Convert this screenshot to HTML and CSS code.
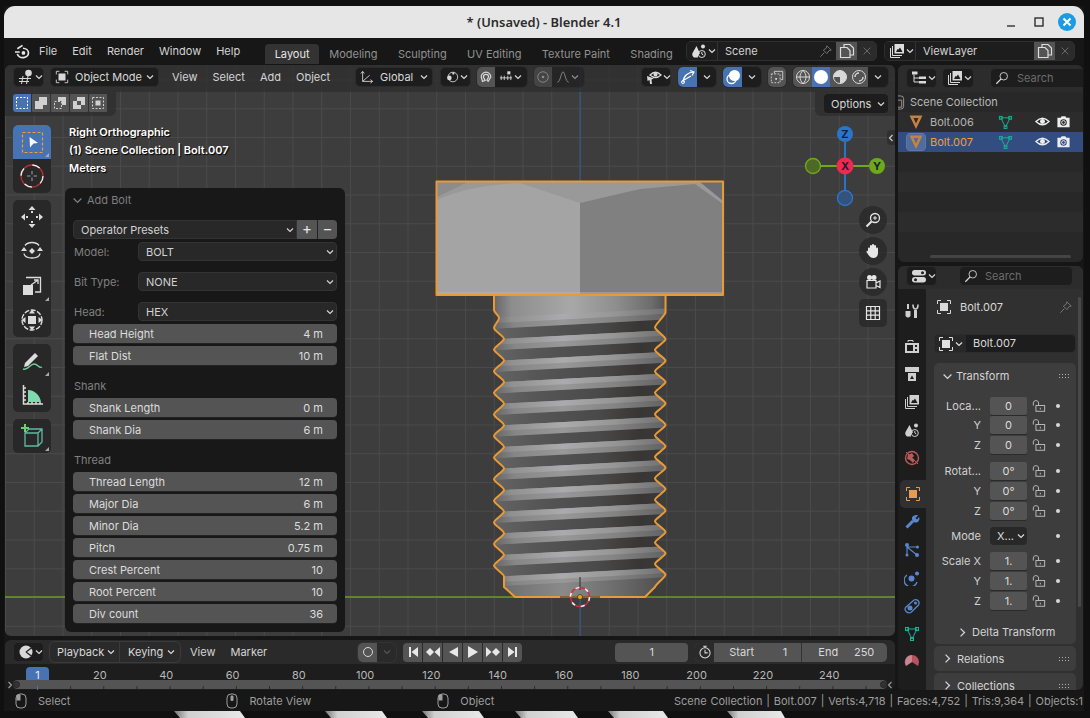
FILE: index.html
```html
<!DOCTYPE html>
<html lang="en">
<head>
<meta charset="utf-8">
<title>Blender 4.1</title>
<link rel="stylesheet" href="styles.css">
</head>
<body>
<svg class="defs" aria-hidden="true">
  <symbol id="chev" viewBox="0 0 10 10"><path d="M2 3.5 5 6.5 8 3.5"/></symbol>
  <symbol id="chevr" viewBox="0 0 10 10"><path d="M3.5 2 6.5 5 3.5 8"/></symbol>
  <symbol id="chevl" viewBox="0 0 10 10"><path d="M6.5 2 3.5 5 6.5 8"/></symbol>
  <symbol id="obj" viewBox="0 0 16 16"><path d="M1.500 5V1.500H5M11 1.500h3.500V5M14.500 11v3.500H11M5 14.500H1.500V11"/><rect class="f" x="4" y="4" width="8" height="8"/></symbol>
  <symbol id="mesh" viewBox="0 0 16 16"><path d="M3 3H13L8 13Z"/><rect x="1.500" y="1.500" width="3" height="3"/><rect x="11.500" y="1.500" width="3" height="3"/><rect x="6.500" y="11.500" width="3" height="3"/></symbol>
  <symbol id="tri" viewBox="0 0 16 16"><path class="f" fill-rule="evenodd" d="M1.500 1.500H14.500L8 15ZM5.500 4 8 9.500 10.500 4Z"/></symbol>
  <symbol id="eye" viewBox="0 0 16 16"><path stroke-width="1.400" d="M1 8Q8 1 15 8 8 15 1 8Z"/><circle class="f" cx="8" cy="8" r="2.600"/></symbol>
  <symbol id="cam" viewBox="0 0 16 16"><path class="f" fill-rule="evenodd" d="M1.500 4H5L6 2.500H10L11 4H14.500V14H1.500ZM8 5.500A3.500 3.500 0 1 0 8 12.500 3.500 3.500 0 0 0 8 5.500Z"/><circle cx="8" cy="9" r="2"/></symbol>
  <symbol id="pin" viewBox="0 0 16 16"><path d="M1.500 14.500 6 10M9 2 14 7 11.500 7.500 9 11 5 7 8.500 4.500Z"/></symbol>
  <symbol id="dup" viewBox="0 0 16 16"><path stroke-width="1.200" d="M5 4V1.500H11L14.500 5V12H11M1.500 4.500H8L11 7.500V14.500H1.500Z"/></symbol>
  <symbol id="x" viewBox="0 0 16 16"><path stroke-width="1.300" d="M3.500 3.500 12.500 12.500M12.500 3.500 3.500 12.500"/></symbol>
  <symbol id="search" viewBox="0 0 16 16"><circle cx="10" cy="6" r="4.300"/><path stroke-width="1.500" d="M7 9 1.500 14.500"/></symbol>
  <symbol id="layer" viewBox="0 0 16 16"><path d="M1.500 5V14.500H11M3.500 3V12.500H13"/><path class="f" fill-rule="evenodd" d="M5.500 1H15V10.500H5.500ZM7 9H13.500L11 4.500 9.500 6.500 8.500 6Z"/></symbol>
  <symbol id="scene" viewBox="0 0 16 16"><path class="f" d="M5.500 3 9 10.500A3.500 3.500 0 0 0 7 14.500H3A4 4 0 0 1 1.500 10Z"/><circle class="f" cx="12" cy="3.500" r="2"/><circle cx="10.800" cy="11" r="3.500"/><path d="M10.800 9v2l1.500 1"/></symbol>
  <symbol id="grid3d" viewBox="0 0 16 16"><path d="M1 9.500H13M1 12.500H11M5 7 3.500 15M10 7 8.500 15"/><circle class="f" cx="10.500" cy="4" r="3.300"/></symbol>
  <symbol id="outl" viewBox="0 0 16 16"><path class="f" d="M1 1.500H6.500V4.500H1ZM8 6.500H15V9H8ZM8 11H15V13.500H8Z"/><path d="M3 4.500V12H8M3 8H8"/></symbol>
  <symbol id="props" viewBox="0 0 16 16"><rect class="f" x="1" y="2" width="14" height="5.500" rx="2.700"/><rect class="f" x="1" y="9" width="14" height="5.500" rx="2.700"/><circle cx="11.500" cy="4.700" r="1.500" fill="#1d1d1d" stroke="none"/><circle cx="4.500" cy="11.700" r="1.500" fill="#1d1d1d" stroke="none"/></symbol>
  <symbol id="clock" viewBox="0 0 16 16"><circle class="f" cx="8" cy="8" r="6.500"/><path stroke="#282828" stroke-width="1.400" d="M8 8 14 3.500M8 8 14 12.500"/></symbol>
  <symbol id="timer" viewBox="0 0 16 16"><circle cx="8" cy="9" r="5.800" stroke-width="1.200"/><path stroke-width="1.200" d="M6 1.500h4M8 1.500v2M8 5.500V9H11"/></symbol>
  <symbol id="lock" viewBox="0 0 16 16"><rect x="4.500" y="7.500" width="10" height="6.500"/><path d="M1.500 7.500V4.500C1.500 1 7.500 1 7.500 4.500V7.500M9.500 10v2"/></symbol>
  <symbol id="mouse-l" viewBox="0 0 16 16"><rect x="3" y="1" width="10" height="14" rx="4"/><path class="f" d="M7.500 1.500H5A2 2 0 0 0 3.500 4V7.500H7.500Z"/></symbol>
  <symbol id="mouse-m" viewBox="0 0 16 16"><rect x="3" y="1" width="10" height="14" rx="4"/><rect class="f" x="6.500" y="2.500" width="3" height="5.500" rx="1"/></symbol>
  <symbol id="grip" viewBox="0 0 14 6"><path class="f" d="M1 1h1v1H1zM4 1h1v1H4zM7 1h1v1H7zM10 1h1v1h-1zM1 4h1v1H1zM4 4h1v1H4zM7 4h1v1H7zM10 4h1v1h-1z"/></symbol>
  <symbol id="gridico" viewBox="0 0 16 16"><path stroke-width="1.200" d="M1.500 1.500H14.500V14.500H1.500ZM1.500 5.800H14.500M1.500 10.200H14.500M5.800 1.500V14.500M10.200 1.500V14.500"/></symbol>
</svg>

<div class="win">
  <header class="titlebar">
    <span class="title">* (Unsaved) - Blender 4.1</span>
    <div class="wctl">
      <svg class="wmin" viewBox="0 0 14 14"><path d="M3 11H11"/></svg>
      <svg class="wmax" viewBox="0 0 14 14"><rect x="3" y="3" width="8" height="8"/></svg>
      <span class="wclose"><svg viewBox="0 0 14 14"><path d="M3.500 3.500 10.500 10.500M10.500 3.500 3.500 10.500"/></svg></span>
    </div>
  </header>

  <nav class="topbar">
    <svg class="logo" viewBox="0 0 18 16"><path class="logo-s" d="M1 8.500H6M3.500 5 9 1.500M3.500 10.500A6 5 0 1 0 9.500 4.500"/><circle class="logo-f" cx="10" cy="9.500" r="2"/></svg>
    <span class="mn">File</span><span class="mn">Edit</span><span class="mn">Render</span><span class="mn">Window</span><span class="mn">Help</span>
    <div class="tabs">
      <span class="tab on">Layout</span><span class="tab">Modeling</span><span class="tab">Sculpting</span><span class="tab">UV Editing</span><span class="tab">Texture Paint</span><span class="tab">Shading</span>
    </div>
    <div class="idblock first">
      <span class="idicon"><svg class="ic i16"><use href="#scene"/></svg><svg class="chev"><use href="#chev"/></svg></span>
      <span class="idname sc">Scene<svg class="ic i14 dim"><use href="#pin"/></svg></span>
      <span class="idbtn on"><svg class="ic i16"><use href="#dup"/></svg></span>
      <span class="idbtn"><svg class="ic i12 dim2"><use href="#x"/></svg></span>
    </div>
    <div class="idblock">
      <span class="idicon vl"><svg class="ic i16"><use href="#layer"/></svg><svg class="chev"><use href="#chev"/></svg></span>
      <span class="idname">ViewLayer</span>
      <span class="idbtn on"><svg class="ic i16"><use href="#dup"/></svg></span>
      <span class="idbtn"><svg class="ic i12 dim2"><use href="#x"/></svg></span>
    </div>
  </nav>

  <main class="main">
    <div class="col-left">
      <section class="viewport">
        <svg class="scene3d" viewBox="5 65 890 571" aria-hidden="true">
          <defs>
            <linearGradient id="gBase" x1="0" x2="1" y1="0" y2="0">
              <stop offset="0" stop-color="#5f5f5f"/><stop offset=".12" stop-color="#8d8d8d"/><stop offset=".45" stop-color="#a8a8a8"/><stop offset=".7" stop-color="#8e8e8e"/><stop offset=".9" stop-color="#6c6c6c"/><stop offset="1" stop-color="#4a4a4c"/>
            </linearGradient>
            <linearGradient id="gLight" gradientUnits="userSpaceOnUse" x1="494" x2="666" y1="0" y2="0">
              <stop offset="0" stop-color="#6e6e6e"/><stop offset=".1" stop-color="#909090"/><stop offset=".4" stop-color="#ababad"/><stop offset=".7" stop-color="#969696"/><stop offset="1" stop-color="#707072"/>
            </linearGradient>
            <linearGradient id="gLow" gradientUnits="userSpaceOnUse" x1="494" x2="666" y1="0" y2="0">
              <stop offset="0" stop-color="#666"/><stop offset=".12" stop-color="#868686"/><stop offset=".4" stop-color="#989899"/><stop offset=".7" stop-color="#848484"/><stop offset="1" stop-color="#626264"/>
            </linearGradient>
            <linearGradient id="gMid" gradientUnits="userSpaceOnUse" x1="494" x2="666" y1="0" y2="0">
              <stop offset="0" stop-color="#6a6a6a"/><stop offset=".4" stop-color="#8a8a8a"/><stop offset=".75" stop-color="#686868"/><stop offset="1" stop-color="#4c4c4c"/>
            </linearGradient>
            <linearGradient id="gDark" gradientUnits="userSpaceOnUse" x1="494" x2="666" y1="0" y2="0">
              <stop offset="0" stop-color="#646464"/><stop offset=".25" stop-color="#565656"/><stop offset=".6" stop-color="#4a4a4a"/><stop offset=".85" stop-color="#383634"/><stop offset="1" stop-color="#3c3a38"/>
            </linearGradient>
            <linearGradient id="key" x1="0" x2="1" y1="0" y2="0"><stop offset="0" stop-color="#777"/><stop offset=".2" stop-color="#d0d0d0"/><stop offset="1" stop-color="#e8e8e8"/></linearGradient>
            <path id="boltPath" d="M494 295V310c0 3 5 5 5 8c0 3-5 7-5 10c0 2.500 10 8.300 10 10.800c0 2.500-10 8.300-10 10.800c0 2.500 10 8.300 10 10.800c0 2.500-10 8.300-10 10.800c0 2.500 10 8.300 10 10.800c0 2.500-10 8.300-10 10.800c0 2.500 10 8.300 10 10.800c0 2.500-10 8.300-10 10.800c0 2.500 10 8.300 10 10.800c0 2.500-10 8.300-10 10.800c0 2.500 10 8.300 10 10.800c0 2.500-10 8.300-10 10.800c0 2.500 10 8.300 10 10.800c0 2.500-10 8.300-10 10.800c0 2.500 10 8.300 10 10.800c0 2.500-10 8.300-10 10.800c0 2.500 10 8.300 10 10.800c0 2.500-10 8.300-10 10.800c0 2.500 10 8.300 10 10.800c0 2.500-10 8.300-10 10.800c0 2.500 10 8.300 10 10.800c0 2.500-10 8.300-10 10.800c0 2.500 10 8.300 10 10.800V587L515 597H645L655 587C657 583 665.500 577.200 665.500 574.700c0-2.500-10.500-8.200-10.500-10.700c0-2.500 10.500-8.200 10.500-10.700c0-2.500-10.500-8.200-10.500-10.700c0-2.500 10.500-8.200 10.500-10.700c0-2.500-10.500-8.200-10.500-10.700c0-2.500 10.500-8.200 10.500-10.700c0-2.500-10.500-8.200-10.500-10.700c0-2.500 10.500-8.200 10.500-10.700c0-2.500-10.500-8.200-10.500-10.700c0-2.500 10.500-8.200 10.500-10.700c0-2.500-10.500-8.200-10.500-10.700c0-2.500 10.500-8.200 10.500-10.700c0-2.500-10.500-8.200-10.500-10.700c0-2.500 10.500-8.200 10.500-10.700c0-2.500-10.500-8.200-10.500-10.700c0-2.500 10.500-8.200 10.500-10.700c0-2.500-10.500-8.200-10.500-10.700c0-2.500 10.500-8.200 10.500-10.700c0-2.500-10.500-8.200-10.500-10.700c0-2.500 10.500-8.200 10.500-10.700c0-2.500-10.500-8.200-10.500-10.700c0-2.500 10.500-8.200 10.500-10.700c0-3-10.500-9-10.500-12c0-3 10.500-12 10.500-15V295"/>
            <clipPath id="bodyClip"><use href="#boltPath"/></clipPath>
            <g id="thread">
              <path fill="url(#gLight)" d="M490 339.500 670 330V335.500L490 345Z"/>
              <path fill="url(#gLow)" d="M490 345 670 335.500V341L490 350.500Z"/>
              <path fill="url(#gDark)" d="M490 350.500 670 341V351.700L490 361.200Z"/>
            </g>
          </defs>
          <path class="axis-z" d="M580 65V636"/>
          <path class="axis-y" d="M5 597H895"/>

          <g clip-path="url(#bodyClip)">
            <rect x="490" y="295" width="180" height="305" fill="url(#gBase)"/>
            <use href="#thread" y="-21.600"/><use href="#thread"/><use href="#thread" y="21.600"/><use href="#thread" y="43.200"/><use href="#thread" y="64.800"/><use href="#thread" y="86.400"/><use href="#thread" y="108"/><use href="#thread" y="129.600"/><use href="#thread" y="151.200"/><use href="#thread" y="172.800"/><use href="#thread" y="194.400"/><use href="#thread" y="216"/>
            <path fill="url(#gLight)" d="M490 577 670 567.500V573L490 582.500Z"/>
            <path fill="url(#gLow)" d="M490 582.500 670 573V577L490 586.500Z"/>
            <path fill="url(#gMid)" d="M490 586.500 670 577V600H490Z"/>
          </g>
          <use class="outline" href="#boltPath"/>

          <rect x="437" y="182" width="286" height="113" fill="#999"/>
          <path fill="#8c8c8c" d="M437 182H468L437 197Z"/>
          <path fill="#a4a4a4" d="M437 200Q470 185 520 183L580 203V295H437Z"/>
          <path fill="#808080" d="M580 203 640 189 695 184 723 204V295H580Z"/>
          <path fill="#6d6d74" d="M700 182H723V201Z"/>
          <rect x="437" y="292" width="286" height="2" fill="#b4b4b4" opacity=".5"/>
          <rect class="outline" x="436.500" y="181.500" width="286.500" height="113.500"/>

          <path class="cur-d" d="M580 577V590M560 597H600"/>
          <circle class="cur-r" cx="580" cy="597" r="9.500"/>
          <circle class="cur-w" cx="580" cy="597" r="9.500"/>
          <circle class="origin" cx="580" cy="597" r="2.500"/>

          <path class="gz-z" d="M845 142V190"/><path class="gz-y" d="M821 166H869"/>
          <circle class="gz-neg-y" cx="813" cy="166" r="7.500"/>
          <circle class="gz-neg-z" cx="845" cy="198" r="7.500"/>
          <circle class="gz-fz" cx="845" cy="134" r="8"/>
          <circle class="gz-fx" cx="845" cy="166" r="8.500"/>
          <circle class="gz-fy" cx="877" cy="166" r="8"/>
          <text class="gz-t" x="845" y="138">Z</text>
          <text class="gz-t" x="845" y="170">X</text>
          <text class="gz-t" x="877" y="170">Y</text>
        </svg>

        <div class="vhead">
          <span class="hb w31"><svg class="ic i16"><use href="#grid3d"/></svg><svg class="chev"><use href="#chev"/></svg></span>
          <span class="hb w109 ml6"><svg class="ic i14"><use href="#obj"/></svg><span class="hb-t">Object Mode</span><svg class="chev"><use href="#chev"/></svg></span>
          <div class="hmenu"><span>View</span><span>Select</span><span>Add</span><span>Object</span></div>
          <span class="hb w78 ml25"><svg class="ic i14" viewBox="0 0 16 16"><path d="M3 13V2M3 13 14 13M3 13 11 6M1 4 3 1.500 5 4M12 11 14.500 13 12 15"/></svg><span class="hb-t">Global</span><svg class="chev"><use href="#chev"/></svg></span>
          <span class="hb w31 ml7"><svg class="ic i14" viewBox="0 0 16 16"><circle cx="9" cy="8" r="5.500"/><circle class="f" cx="5" cy="9" r="2.600"/><circle class="f" cx="9.500" cy="4" r="1.300"/></svg><svg class="chev"><use href="#chev"/></svg></span>
          <span class="hgroup ml6">
            <span class="cell c18 grey"><svg class="ic i14" viewBox="0 0 16 16"><path stroke-width="1.400" d="M4 13 2.500 8A5.500 5.500 0 0 1 13.500 8L10.500 13 9 11.500 11 8A3 3 0 0 0 5 8L7 12Z"/></svg></span>
            <span class="cell c32"><svg class="ic i14" viewBox="0 0 16 16"><path d="M1 9H15M2.500 6.500V11.500M6 6.500V11.500M10 6.500V11.500M13.500 6.500V11.500"/><rect class="f" x="9.500" y="1.500" width="3.500" height="3.500"/></svg><svg class="chev"><use href="#chev"/></svg></span>
          </span>
          <span class="hgroup ml7 faded">
            <span class="cell c18 grey"><svg class="ic i14" viewBox="0 0 16 16"><circle cx="8" cy="8" r="6"/><circle class="f" cx="8" cy="8" r="1.500"/></svg></span>
            <span class="cell c32"><svg class="ic i14" viewBox="0 0 16 16"><path d="M1.500 14C5 14 6 2 8 2S11 14 14.500 14"/></svg><svg class="chev"><use href="#chev"/></svg></span>
          </span>
          <span class="hb w30 ml57"><svg class="ic i16" viewBox="0 0 16 16"><path stroke-width="1.300" d="M4 6Q9.500 .5 15 6 9.500 11 4 6Z"/><circle class="f" cx="9.500" cy="5.500" r="2"/><path class="f" d="M1 7 8 9.500 5.500 10.500 6 15 4 15 3.500 11 1.500 12Z"/></svg><svg class="chev"><use href="#chev"/></svg></span>
          <span class="hgroup ml7">
            <span class="cell c19 blue"><svg class="ic i16" viewBox="0 0 16 16"><path stroke-width="1.200" d="M3 13C3.500 7 8 3 14 3M10 1.500 14 3 12 6.500M4 11 11 7"/><circle cx="3" cy="13" r="1.500"/></svg></span>
            <span class="cell c19"><svg class="chev"><use href="#chev"/></svg></span>
          </span>
          <span class="hgroup ml7">
            <span class="cell c19 blue"><svg class="ic i16" viewBox="0 0 16 16"><circle cx="9.500" cy="6.500" r="5.500" class="f"/><circle cx="6.500" cy="10" r="4.500" stroke-width="1.300"/></svg></span>
            <span class="cell c19"><svg class="chev"><use href="#chev"/></svg></span>
          </span>
          <span class="hgroup ml7"><span class="cell c18 grey"><svg class="ic i14" viewBox="0 0 16 16"><path d="M5 4V1.500H14.500V11H12"/><rect stroke-dasharray="2 1.500" x="1.500" y="4.500" width="10" height="10"/><path class="f" d="M6 9h2v2H6z"/></svg></span></span>
          <span class="hgroup ml7">
            <span class="cell c19 grey"><svg class="ic i16" viewBox="0 0 16 16"><circle cx="8" cy="8" r="6.500"/><path d="M1.500 8H14.500M8 1.500C4 5 4 11 8 14.500 12 11 12 5 8 1.500"/></svg></span>
            <span class="cell c18 blue"><svg class="ic i16" viewBox="0 0 16 16"><circle class="f" cx="8" cy="8" r="7"/></svg></span>
            <span class="cell c19 grey"><svg class="ic i16" viewBox="0 0 16 16"><circle cx="8" cy="8" r="6.500"/><path class="f" d="M8 1.500A6.500 6.500 0 0 1 8 14.500V8H1.500A6.500 6.500 0 0 1 8 1.500Z"/></svg></span>
            <span class="cell c19 grey"><svg class="ic i16" viewBox="0 0 16 16"><circle cx="8" cy="8" r="6.500"/><path stroke-width="1.500" d="M4 8A4 4 0 0 1 8 4M12 8A4 4 0 0 1 8 12"/></svg></span>
            <span class="cell c20"><svg class="chev"><use href="#chev"/></svg></span>
          </span>
        </div>

        <div class="toolset">
          <span class="sel on"><svg class="ic i14" viewBox="0 0 14 14"><rect stroke-dasharray="2 1.500" x="1.500" y="1.500" width="11" height="11"/></svg></span>
          <span class="sel"><svg class="ic i14" viewBox="0 0 14 14"><path class="f" d="M5 1H13V9H9V13H1V5H5Z"/></svg></span>
          <span class="sel"><svg class="ic i14" viewBox="0 0 14 14"><path class="f" d="M5 1H13V9H9V5H5Z"/><rect stroke-dasharray="2 1.500" x="1.500" y="5.500" width="7" height="7"/></svg></span>
          <span class="sel"><svg class="ic i14" viewBox="0 0 14 14"><path class="f" fill-rule="evenodd" d="M5 1H13V9H9V13H1V5H5ZM5 5V9H9V5Z"/></svg></span>
          <span class="sel"><svg class="ic i14" viewBox="0 0 14 14"><rect stroke-dasharray="2 1.500" x="1.500" y="1.500" width="11" height="11"/><rect class="f" x="4.500" y="4.500" width="5" height="5"/></svg></span>
        </div>
        <div class="optstrip"><span class="optbtn">Options<svg class="chev"><use href="#chev"/></svg></span></div>
        <span class="regtoggle"><svg class="chev"><use href="#chevl"/></svg></span>

        <div class="hud">
          <p>Right Orthographic</p>
          <p>(1) Scene Collection | Bolt.007</p>
          <p>Meters</p>
        </div>

        <aside class="toolbar">
          <div class="tgroup">
            <span class="tool active corner"><svg class="ic i24" viewBox="0 0 24 24"><rect class="dash-o" x="2.500" y="2.500" width="20" height="20"/><path class="f" d="M9.500 7 18 13 13.500 13.500 10 17.500Z"/></svg></span>
            <span class="tool"><svg class="ic i24" viewBox="0 0 24 24"><circle class="dash-rw1" cx="12" cy="12" r="11"/><circle class="dash-rw2" cx="12" cy="12" r="11"/><path class="dim3" stroke-width="1.600" d="M12 7V10.500M12 13.500V17M7 12H10.500M13.500 12H17"/></svg></span>
          </div>
          <div class="tgroup">
            <span class="tool"><svg class="ic i24" viewBox="0 0 24 24"><path class="f" d="M12 1 15.500 5H8.500ZM12 23 8.500 19H15.500ZM1 12 5 8.500V15.500ZM23 12 19 15.500V8.500Z"/><rect class="f" x="11" y="6" width="2" height="2"/><rect class="f" x="11" y="16" width="2" height="2"/><rect class="f" x="6" y="11" width="2" height="2"/><rect class="f" x="16" y="11" width="2" height="2"/></svg></span>
            <span class="tool"><svg class="ic i24" viewBox="0 0 24 24"><path stroke-width="1.300" d="M5 6.500C8 2.500 16 2.500 19 6.500M4 14.500C5 20.500 19 20.500 20 14.500"/><path class="f" d="M12 9 15 12 12 15 9 12ZM1 12H7L4 8ZM23 12H17L20 8Z"/></svg></span>
            <span class="tool corner"><svg class="ic i24" viewBox="0 0 24 24"><path stroke-width="1.300" d="M6 3.500H20.500V18H15"/><rect class="f" x="3" y="11" width="10" height="10"/><path stroke-width="1.300" d="M11 11 18 6M14 6H18V10"/></svg></span>
            <span class="tool"><svg class="ic i24" viewBox="0 0 24 24"><circle stroke-width="1.400" stroke-dasharray="5 1.500" cx="12" cy="12" r="10"/><rect class="f" x="8" y="8" width="8" height="8"/><path class="f" d="M12 1.500 15 5.500H9ZM12 22.500 9 18.500H15ZM1.500 12 5.500 9V15ZM22.500 12 18.500 15V9Z"/></svg></span>
          </div>
          <div class="tgroup">
            <span class="tool corner"><svg class="ic i24" viewBox="0 0 24 24"><path class="f" d="M5 14 15 4 18 7 8 17 4 18Z"/><path class="green" stroke-width="1.400" d="M3 20C8 22 10 15 14 15 18 15 19 20 22 18"/></svg></span>
            <span class="tool"><svg class="ic i24" viewBox="0 0 24 24"><path class="greenf" d="M8 7C15 7 20 13 21 19H8Z"/><path stroke-width="1.500" d="M3.500 2V21H23M3.500 5H6M3.500 9H6M3.500 13H6M3.500 17H6M8 19V21M12 19V21M16 19V21M20 19V21"/></svg></span>
          </div>
          <div class="tgroup">
            <span class="tool corner"><svg class="ic i24" viewBox="0 0 24 24"><path class="teal" stroke-width="1.300" d="M5 9H18V22H5ZM5 9 9 5H22V18L18 22M18 9 22 5"/><path class="greenb" stroke-width="2" d="M5 0V8M1 4H9"/></svg></span>
          </div>
        </aside>

        <aside class="navgiz">
          <span class="nav"><svg class="ic i16" viewBox="0 0 16 16"><circle cx="10" cy="6" r="4.500" stroke-width="1.300"/><path stroke-width="2" d="M6.500 9.500 1.500 14.500"/><path d="M8 6H12M10 4V8"/></svg></span>
          <span class="nav"><svg class="ic i16" viewBox="0 0 16 16"><path class="f" d="M3 9V5.500C3 4 5 4 5 5.500V3C5 1.500 7 1.500 7 3V2C7 .5 9 .5 9 2V3C9 1.500 11 1.500 11 3V5.500C11 4 13 4 13 5.500V10C13 13 11 15 8.500 15 6 15 5 14 3.500 12L1.500 9C1 7.500 3 7 3 9Z"/></svg></span>
          <span class="nav"><svg class="ic i16" viewBox="0 0 16 16"><path stroke-width="1.200" d="M2 6.500H11V14H2ZM11 9 15 7V13.500L11 11.500"/><circle class="f" cx="4.500" cy="3.500" r="2.500"/><circle class="f" cx="9" cy="3.500" r="2.500"/></svg></span>
          <span class="nav sq"><svg class="ic i16"><use href="#gridico"/></svg></span>
        </aside>

        <aside class="oppanel">
          <div class="op-head"><svg class="chev big"><use href="#chev"/></svg>Add Bolt</div>
          <div class="op-presets">
            <span class="dd grow">Operator Presets<svg class="chev"><use href="#chev"/></svg></span>
            <span class="pbtn">+</span><span class="pbtn">−</span>
          </div>
          <div class="op-row"><label>Model:</label><span class="dd">BOLT<svg class="chev"><use href="#chev"/></svg></span></div>
          <div class="op-row mt11"><label>Bit Type:</label><span class="dd">NONE<svg class="chev"><use href="#chev"/></svg></span></div>
          <div class="op-row mt11"><label>Head:</label><span class="dd">HEX<svg class="chev"><use href="#chev"/></svg></span></div>
          <div class="sl"><span>Head Height</span><span>4 m</span></div>
          <div class="sl"><span>Flat Dist</span><span>10 m</span></div>
          <div class="op-sec">Shank</div>
          <div class="sl"><span>Shank Length</span><span>0 m</span></div>
          <div class="sl"><span>Shank Dia</span><span>6 m</span></div>
          <div class="op-sec">Thread</div>
          <div class="sl"><span>Thread Length</span><span>12 m</span></div>
          <div class="sl"><span>Major Dia</span><span>6 m</span></div>
          <div class="sl"><span>Minor Dia</span><span>5.2 m</span></div>
          <div class="sl"><span>Pitch</span><span>0.75 m</span></div>
          <div class="sl"><span>Crest Percent</span><span>10</span></div>
          <div class="sl"><span>Root Percent</span><span>10</span></div>
          <div class="sl"><span>Div count</span><span>36</span></div>
        </aside>
      </section>

      <section class="timeline">
        <div class="thead">
          <span class="hb w31"><svg class="ic i16"><use href="#clock"/></svg><svg class="chev"><use href="#chev"/></svg></span>
          <span class="hgroup ml6 outl">
            <span class="cell c70">Playback<svg class="chev"><use href="#chev"/></svg></span>
            <span class="cell c60">Keying<svg class="chev"><use href="#chev"/></svg></span>
          </span>
          <div class="hmenu tm"><span>View</span><span>Marker</span></div>
          <span class="hgroup autokey">
            <span class="cell c19 grey"><svg class="ic i12" viewBox="0 0 12 12"><circle cx="6" cy="6" r="4.500"/></svg></span>
            <span class="cell c19"><svg class="chev dimc"><use href="#chev"/></svg></span>
          </span>
          <span class="transport">
            <span><svg class="i12" viewBox="0 0 12 12"><path d="M2 1H4V11H2ZM11 1V11L4.500 6Z"/></svg></span>
            <span><svg class="i14" viewBox="0 0 14 12"><path d="M4 2 8 6 4 10 0 6ZM14 1V11L8.500 6Z"/></svg></span>
            <span><svg class="i12" viewBox="0 0 12 12"><path d="M11 1V11L2 6Z"/></svg></span>
            <span><svg class="i12" viewBox="0 0 12 12"><path d="M1 0V12L11 6Z"/></svg></span>
            <span><svg class="i14" viewBox="0 0 14 12"><path d="M0 1V11L5.500 6ZM10 2 14 6 10 10 6 6Z"/></svg></span>
            <span><svg class="i12" viewBox="0 0 12 12"><path d="M1 1 7.500 6 1 11ZM8 1H10V11H8Z"/></svg></span>
          </span>
          <span class="frame">1</span>
          <span class="hgroup range">
            <span class="cell c19 tmr"><svg class="ic i14"><use href="#timer"/></svg></span>
            <span class="cell rng start"><span>Start</span><span>1</span></span>
            <span class="cell rng end"><span>End</span><span>250</span></span>
          </span>
        </div>
        <div class="ruler">
          <span>20</span><span>40</span><span>60</span><span>80</span><span>100</span><span>120</span><span>140</span><span>160</span><span>180</span><span>200</span><span>220</span><span>240</span>
          <span class="curframe">1</span>
          <span class="scrollbar"><i></i><i></i></span>
          <span class="curtick"></span>
          <span class="rt-l"><svg class="chev"><use href="#chevr"/></svg></span>
          <span class="rt-r"><svg class="chev"><use href="#chevl"/></svg></span>
        </div>
      </section>
    </div>

    <div class="col-right">
      <section class="outliner">
        <div class="ohead">
          <span class="hb w31"><svg class="ic i16"><use href="#outl"/></svg><svg class="chev"><use href="#chev"/></svg></span>
          <span class="hb w32 ml5"><svg class="ic i16"><use href="#layer"/></svg><svg class="chev"><use href="#chev"/></svg></span>
          <span class="srch"><svg class="ic i14"><use href="#search"/></svg>Search</span>
        </div>
        <div class="orow coll"><svg class="collicon" viewBox="0 0 14 16"><rect x="1" y="1" width="12" height="14" rx="3"/><path d="M3 5.500H11V13H3Z"/></svg>Scene Collection</div>
        <div class="orow alt">
          <svg class="ic tri"><use href="#tri"/></svg><span class="oname">Bolt.006</span>
          <svg class="ic meshic"><use href="#mesh"/></svg>
          <svg class="ic eyeic"><use href="#eye"/></svg><svg class="ic camic"><use href="#cam"/></svg>
        </div>
        <div class="orow selrow">
          <span class="trihl"><svg class="ic tri"><use href="#tri"/></svg></span><span class="oname act">Bolt.007</span>
          <svg class="ic meshic"><use href="#mesh"/></svg>
          <svg class="ic eyeic"><use href="#eye"/></svg><svg class="ic camic"><use href="#cam"/></svg>
        </div>
        <div class="orow"></div><div class="orow alt"></div><div class="orow"></div><div class="orow alt"></div>
        <div class="oscroll"></div>
      </section>

      <section class="properties">
        <div class="phead">
          <span class="hb w31"><svg class="ic i16"><use href="#props"/></svg><svg class="chev"><use href="#chev"/></svg></span>
          <span class="srch wide"><svg class="ic i14"><use href="#search"/></svg>Search</span>
        </div>
        <div class="pbody">
          <nav class="ptabs">
            <span class="ptab"><svg class="ic i16" viewBox="0 0 16 16"><path class="f" d="M3 1H5V6H3ZM1.500 8H6.500V13Q4 16 1.500 13ZM10 7H13V15H10Z"/><path stroke-width="1.600" d="M9 1.500C9 5 10 6 11.500 6S14 5 14 1.500"/></svg></span>
            <span class="ptab gap"><svg class="ic i16" viewBox="0 0 16 16"><path class="f" fill-rule="evenodd" d="M1 5H15V15H1ZM3 7V13H9V7ZM11 7V9H13V7ZM11 11V13H13V11Z"/><path d="M4 4V2.500H9V4"/></svg></span>
            <span class="ptab"><svg class="ic i16" viewBox="0 0 16 16"><path class="f" d="M1 1H15V6H1ZM4 7H12V15H4Z"/><path class="f dk" d="M6 13 8 9.500 10 13Z"/></svg></span>
            <span class="ptab"><svg class="ic i16"><use href="#layer"/></svg></span>
            <span class="ptab"><svg class="ic i16"><use href="#scene"/></svg></span>
            <span class="ptab"><svg class="ic i16 world" viewBox="0 0 16 16"><circle cx="8" cy="8" r="6.500" stroke-width="1.400"/><path class="f" d="M4 5 8 3 10 6 8 8 11 10 9 13 6 10 3 9Z"/><path d="M2 2 14 14"/></svg></span>
            <span class="ptab active gap2"><svg class="ic i16 orange" viewBox="0 0 16 16"><use href="#obj"/></svg></span>
            <span class="ptab"><svg class="ic i16 blueic" viewBox="0 0 16 16"><path stroke-width="3" d="M2.500 13.500 9 7"/><path class="f" d="M8 3.500C9 1.500 12 .5 14 1.500L11.500 4 13 5.500 15 3C16 5 15 8 12.500 8.500 10 9 7.500 7 8 3.500Z"/></svg></span>
            <span class="ptab"><svg class="ic i16 blueic" viewBox="0 0 16 16"><path stroke-width="1.200" d="M3 2V13M3 5 14 5M3 5 13 13"/><circle class="f" cx="3" cy="3" r="2"/><circle class="f" cx="13.500" cy="5" r="1.500"/><circle class="f" cx="13" cy="13" r="2"/><circle class="f" cx="3" cy="13" r="1.500"/></svg></span>
            <span class="ptab"><svg class="ic i16 blueic" viewBox="0 0 16 16"><path stroke-width="1.300" d="M3 5A6.500 6.500 0 1 0 13 12"/><circle class="f" cx="7.500" cy="8.500" r="3"/><circle class="f" cx="13" cy="3.500" r="2"/></svg></span>
            <span class="ptab"><svg class="ic i16 blueic" viewBox="0 0 16 16"><path stroke-width="1.300" d="M1.500 9.500 10 2A3.500 3.500 0 0 1 14.500 7L7 14.500C3 16 0 12 1.500 9.500Z"/><circle class="f" cx="6" cy="10" r="2.500"/><circle class="f" cx="11.500" cy="5" r="1.500"/></svg></span>
            <span class="ptab"><svg class="ic i16 tealic"><use href="#mesh"/></svg></span>
            <span class="ptab"><svg class="ic i16 mat" viewBox="0 0 16 16"><circle class="f" cx="8" cy="8" r="7"/><path fill="#1d1d1d" stroke="none" d="M8 8 14 12A7 7 0 0 1 2 12Z"/><path fill="#e8e8e8" stroke="none" d="M8 1V8L2 12A7 7 0 0 1 8 1Z" opacity=".35"/></svg></span>
          </nav>
          <div class="pcontent">
            <div class="ptitle"><svg class="ic i16"><use href="#obj"/></svg><span class="pt-name">Bolt.007</span><svg class="ic i14 dim"><use href="#pin"/></svg></div>
            <div class="pfield">
              <span class="pf-ic"><svg class="ic i16"><use href="#obj"/></svg><svg class="chev"><use href="#chev"/></svg></span>
              <span class="pf-name">Bolt.007</span>
            </div>
            <div class="panel transform">
              <div class="panel-h"><svg class="chev big"><use href="#chev"/></svg>Transform<svg class="grip"><use href="#grip"/></svg></div>
              <div class="pr t"><label>Loca...</label><span class="num top">0</span><svg class="ic lock"><use href="#lock"/></svg><i class="dot"></i></div>
              <div class="pr"><label>Y</label><span class="num">0</span><svg class="ic lock"><use href="#lock"/></svg><i class="dot"></i></div>
              <div class="pr"><label>Z</label><span class="num">0</span><svg class="ic lock"><use href="#lock"/></svg><i class="dot"></i></div>
              <div class="pr sp8"><label>Rotat...</label><span class="num">0°</span><svg class="ic lock"><use href="#lock"/></svg><i class="dot"></i></div>
              <div class="pr"><label>Y</label><span class="num">0°</span><svg class="ic lock"><use href="#lock"/></svg><i class="dot"></i></div>
              <div class="pr"><label>Z</label><span class="num">0°</span><svg class="ic lock"><use href="#lock"/></svg><i class="dot"></i></div>
              <div class="pr sp7"><label>Mode</label><span class="num dark">X...<svg class="chev"><use href="#chev"/></svg></span><span class="lockgap"></span><i class="dot"></i></div>
              <div class="pr sp7"><label>Scale X</label><span class="num">1.</span><svg class="ic lock"><use href="#lock"/></svg><i class="dot"></i></div>
              <div class="pr"><label>Y</label><span class="num">1.</span><svg class="ic lock"><use href="#lock"/></svg><i class="dot"></i></div>
              <div class="pr"><label>Z</label><span class="num">1.</span><svg class="ic lock"><use href="#lock"/></svg><i class="dot"></i></div>
              <div class="delta"><svg class="chev big"><use href="#chevr"/></svg>Delta Transform</div>
            </div>
            <div class="panel closed"><svg class="chev big"><use href="#chevr"/></svg>Relations<svg class="grip"><use href="#grip"/></svg></div>
            <div class="panel closed"><svg class="chev big"><use href="#chevr"/></svg>Collections<svg class="grip"><use href="#grip"/></svg></div>
            <div class="pscroll"></div>
          </div>
        </div>
      </section>
    </div>
  </main>

  <footer class="status">
    <svg class="ic i16 ms1"><use href="#mouse-l"/></svg><span class="st-a">Select</span>
    <svg class="ic i16 ms2"><use href="#mouse-m"/></svg><span class="st-b">Rotate View</span>
    <svg class="ic i16 ms3"><use href="#mouse-l"/></svg><span class="st-c">Object</span>
    <span class="stats">Scene Collection | Bolt.007 | Verts:4,718 | Faces:4,752 | Tris:9,364 | Objects:1</span>
  </footer>
</div>

<svg class="desk" viewBox="0 0 1090 7" aria-hidden="true">
  <path fill="url(#key)" d="M174 0H240L245 7H180Z"/>
  <path fill="url(#key)" d="M325 0H382L387 7H331Z"/>
  <path fill="url(#key)" d="M422 0H479L484 7H428Z"/>
  <path fill="url(#key)" d="M515 0H573L578 7H521Z"/>
  <path fill="url(#key)" d="M608 0H663L668 7H614Z"/>
  <path fill="url(#key)" d="M727 0H781L785 7H733Z"/>
</svg>
</body>
</html>
```

FILE: styles.css
```css
* { box-sizing: border-box; }
html, body { margin: 0; padding: 0; }
body {
  width: 1090px; height: 718px; overflow: hidden;
  background: #101010;
  font-family: Inter, "Liberation Sans", sans-serif;
  font-size: 11px; color: #d4d4d4;
  padding-top: 6px;
}
p { margin: 0; }
svg { display: block; flex: none; }
.defs { width: 0; height: 0; position: absolute; }
.ic { fill: none; stroke: currentColor; stroke-width: 1; }
.f { fill: currentColor; stroke: none; }
.i12 { width: 12px; height: 12px; }
.i14 { width: 14px; height: 14px; }
.i16 { width: 16px; height: 16px; }
.i24 { width: 24px; height: 24px; }
.chev { width: 10px; height: 10px; fill: none; stroke: currentColor; stroke-width: 1.200; }
.chev.big { width: 13px; height: 13px; stroke-width: 1; }
.dim { color: #7d7d7d; }
.dim2 { color: #6a6a6a; }
.dimc { color: #555; }

.win { margin-left: 4px; width: 1080px; height: 705px; background: #161616; display: flex; flex-direction: column; }
.titlebar { height: 32px; flex: none; background: #e6e6e6; border-radius: 11px 11px 0 0; position: relative; display: flex; align-items: center; justify-content: center; }
.title { font-family: "Noto Sans", sans-serif; font-weight: 600; font-size: 12.900px; color: #2c2c2c; white-space: nowrap; }
.wctl { position: absolute; right: 8px; top: 7px; display: flex; align-items: center; gap: 14px; }
.wmin, .wmax { width: 14px; height: 14px; fill: none; stroke: #222; stroke-width: 1.300; }
.wclose { width: 18px; height: 18px; margin-left: -2px; border-radius: 50%; background: #1b9ce2; display: flex; align-items: center; justify-content: center; }
.wclose svg { width: 14px; height: 14px; fill: none; stroke: #fff; stroke-width: 2; }

.topbar { height: 26px; flex: none; display: flex; align-items: center; padding-left: 10px; background: #171717; white-space: nowrap; }
.logo { width: 17px; height: 15px; margin-right: 8px; }
.logo-s { fill: none; stroke: #e8e8e8; stroke-width: 1.800; }
.logo-f { fill: #e8e8e8; }
.mn { margin-right: 15px; }
.tabs { display: flex; align-self: flex-end; margin-left: 10px; height: 20px; flex: none; }
.tab { padding: 0 10.200px; line-height: 20px; color: #919191; white-space: nowrap; }
.tab.on { background: #333; color: #e6e6e6; border-radius: 4px 4px 0 0; padding: 0 9.500px; }
.idblock { display: flex; height: 20px; margin-right: 7px; background: #2b2b2b; border: 1px solid #2e2e2e; border-radius: 5px; overflow: hidden; flex: none; }
.idblock.first { margin-left: auto; }
.idicon { width: 30px; display: flex; align-items: center; padding-left: 4px; background: #1d1d1d; color: #ddd; flex: none; }
.idname { width: 119px; padding-left: 7px; line-height: 18px; background: #1d1d1d; display: flex; align-items: center; justify-content: space-between; padding-right: 3px; border-left: 1px solid #333; flex: none; }
.idbtn { width: 19px; display: flex; align-items: center; justify-content: center; color: #ddd; flex: none; }
.idbtn.on { background: #545454; width: 21px; }
.topbar .idblock:last-child { margin-right: 9px; }

.main { flex: 1; display: flex; padding: 1px 1px 0 1px; gap: 3px; min-height: 0; }
.col-left { width: 890px; display: flex; flex-direction: column; gap: 4px; flex: none; }
.col-right { width: 185px; display: flex; flex-direction: column; gap: 4px; flex: none; }

.viewport {
  height: 571px; position: relative; border-radius: 6px; overflow: hidden; flex: none;
  background-color: #3d3d3d;
  background-image: linear-gradient(#4a4a4a 1px, transparent 1px), linear-gradient(90deg, #4a4a4a 1px, transparent 1px);
  background-size: 28.750px 28.750px;
  background-position: 0 14.500px;
}
.scene3d { position: absolute; left: 0; top: 0; width: 890px; height: 571px; }
.axis-z { stroke: #2a5c9e; stroke-width: 1; fill: none; }
.axis-y { stroke: #6c9a22; stroke-width: 1.300; fill: none; }
.outline { fill: none; stroke: #e99a36; stroke-width: 2; stroke-linejoin: round; }
.cur-d { stroke: #2a2a2a; stroke-width: 1; fill: none; }
.cur-r { fill: none; stroke: #c8303a; stroke-width: 1.600; }
.cur-w { fill: none; stroke: #eee; stroke-width: 1.600; stroke-dasharray: 4 5.950; }
.origin { fill: #f0a020; stroke: #222; stroke-width: .6; }
.gz-z { stroke: #2a74c8; stroke-width: 2; }
.gz-y { stroke: #6fa81a; stroke-width: 2; }
.gz-fz { fill: #2b74c9; }
.gz-fx { fill: #f0294f; }
.gz-fy { fill: #6fa81a; }
.gz-neg-y { fill: #4e6828; stroke: #6fa81a; stroke-width: 1.400; }
.gz-neg-z { fill: #33527c; stroke: #2b74c9; stroke-width: 1.400; }
.gz-t { font-family: Inter, sans-serif; font-size: 11px; font-weight: 700; text-anchor: middle; fill: #152033; }

.vhead { position: relative; height: 27px; padding: 0 0 3px 8px; background: rgba(45,45,45,.75); display: flex; align-items: center; }
.hb { height: 20px; display: flex; align-items: center; background: #1d1d1d; border: 1px solid #2b2b2b; border-radius: 5px; padding: 0 3px 0 4px; color: #d8d8d8; flex: none; }
.hb .chev { margin-left: auto; }
.hb-t { margin-left: 6px; }
.w30 { width: 30px; } .w31 { width: 31px; } .w32 { width: 32px; } .w78 { width: 78px; } .w109 { width: 109px; }
.ml5 { margin-left: 5px; } .ml6 { margin-left: 6px; } .ml7 { margin-left: 7px; } .ml25 { margin-left: 25px; } .ml57 { margin-left: 57px; }
.hmenu { display: flex; gap: 15px; margin-left: 13px; color: #d4d4d4; flex: none; }
.hgroup { height: 20px; display: flex; background: #1d1d1d; box-shadow: 0 0 0 1px #2b2b2b; border-radius: 5px; overflow: hidden; color: #d8d8d8; flex: none; }
.hgroup.faded { opacity: .55; }
.cell { display: flex; align-items: center; justify-content: center; }
.cell.grey { background: #545454; }
.cell.blue { background: #4772b3; color: #fff; }
.c18 { width: 18px; } .c19 { width: 19px; } .c20 { width: 20px; } .c32 { width: 32px; }
.c60 { width: 60px; padding-left: 8px; justify-content: space-between; padding-right: 4px; }
.c70 { width: 70px; padding-left: 7px; justify-content: space-between; padding-right: 3px; border-right: 1px solid #3a3a3a; }

.toolset { position: absolute; left: 0; top: 27px; width: 111px; height: 24px; padding: 2px 8px; display: flex; gap: 1px; background: rgba(45,45,45,.75); border-radius: 0 0 6px 0; }
.sel { width: 18px; height: 18px; background: #545454; display: flex; align-items: center; justify-content: center; color: #d0d0d0; border-radius: 1px; }
.sel.on { background: #4772b3; color: #fff; border-radius: 3px 0 0 3px; }
.optstrip { position: absolute; right: 0; top: 27px; width: 80px; height: 24px; padding: 2px 7px 0 9px; background: rgba(45,45,45,.75); border-radius: 0 0 0 6px; }
.optbtn { height: 19px; display: flex; align-items: center; justify-content: space-between; padding: 0 2px 0 7px; background: #1d1d1d; border-radius: 4px; color: #d8d8d8; }
.regtoggle { position: absolute; right: 0; top: 65px; width: 8px; height: 15px; background: #2f2f2f; border-radius: 4px 0 0 4px; display: flex; align-items: center; justify-content: center; color: #ccc; }
.hud { position: absolute; left: 64px; top: 58px; color: #fff; font-weight: 600; font-size: 11px; line-height: 18px; text-shadow: 1px 1px 1px #000; }

.toolbar { position: absolute; left: 8px; top: 60px; display: flex; flex-direction: column; gap: 7px; }
.tgroup { width: 38px; border-radius: 5px; overflow: hidden; background: #282828; display: flex; flex-direction: column; gap: 1px; }
.tool { height: 33.500px; display: flex; align-items: center; justify-content: center; position: relative; color: #dcdcdc; }
.tool.active { background: #4772b3; color: #fff; }
.corner::after { content: ""; position: absolute; right: 2px; bottom: 2px; border: 2px solid transparent; border-right-color: #aaa; border-bottom-color: #aaa; }
.dash-o { stroke: #f0a030; stroke-width: 1.200; stroke-dasharray: 3 2; }
.dash-rw1 { stroke: #b03038; stroke-width: 1.300; }
.dash-rw2 { stroke: #eee; stroke-width: 1.300; stroke-dasharray: 8 9.300; }
.dim3 { stroke: #777; }
.green { stroke: #70d0a0; }
.greenf { fill: #80dab0; stroke: none; }
.teal { stroke: #60b8a0; }
.greenb { stroke: #70d070; }

.navgiz { position: absolute; left: 854px; top: 141px; display: flex; flex-direction: column; align-items: center; gap: 3px; }
.nav { width: 28px; height: 28px; border-radius: 50%; background: rgba(35,35,35,.65); display: flex; align-items: center; justify-content: center; color: #e6e6e6; }
.nav.sq { border-radius: 5px; }

.oppanel { position: absolute; left: 60px; top: 123px; width: 280px; height: 444px; padding: 0 8px; background: #181818; border-radius: 6px; display: flex; flex-direction: column; }
.op-head { height: 24px; margin-bottom: 8px; display: flex; align-items: center; gap: 3px; color: #7e7e7e; flex: none; margin-left: -2px; }
.op-presets { display: flex; height: 19px; flex: none; }
.dd { flex: 1; height: 19px; background: #282828; border: 1px solid #333; border-radius: 4px; display: flex; align-items: center; justify-content: space-between; padding: 0 1px 0 7px; color: #d2d2d2; }
.grow { border-radius: 4px 0 0 4px; }
.pbtn { width: 20px; background: #545454; color: #e6e6e6; font-size: 15px; line-height: 18px; text-align: center; }
.pbtn:last-child { border-radius: 0 4px 4px 0; border-left: 1px solid #222; }
.op-row { display: flex; height: 19px; margin-top: 3px; flex: none; }
.op-row label { width: 65px; color: #808080; line-height: 20px; padding-left: 1px; }
.mt11 { margin-top: 11px; }
.sl { height: 19px; margin-top: 3px; flex: none; background: #545454; border-radius: 4px; display: flex; align-items: center; justify-content: space-between; padding: 0 14px 0 16px; color: #dcdcdc; box-shadow: 0 1px 0 #222; }
.op-sec { height: 20px; line-height: 22px; margin-top: 10px; color: #808080; padding-left: 1px; flex: none; }

.timeline { height: 50px; border-radius: 6px; overflow: hidden; background: #1d1d1d; display: flex; flex-direction: column; flex: none; }
.thead { height: 24px; flex: none; background: #2a2a2a; display: flex; align-items: center; padding-left: 8px; color: #d8d8d8; }
.outl { background: #2a2a2a; box-shadow: 0 0 0 1px #3a3a3a; }
.hmenu.tm { margin-left: 10px; }
.autokey { margin-left: 91px; width: 38px; height: 19px; background: #2a2a2a; box-shadow: 0 0 0 1px #333; }
.transport { display: flex; height: 19px; margin-left: 7px; border-radius: 4px; overflow: hidden; gap: 1px; flex: none; }
.transport span { width: 19px; display: flex; align-items: center; justify-content: center; background: #545454; fill: #e8e8e8; }
.frame { width: 73px; height: 19px; margin-left: 93px; background: #545454; border-radius: 4px; text-align: center; line-height: 19px; flex: none; }
.range { margin-left: 7px; box-shadow: none; height: 19px; background: #545454; }
.tmr { width: 19px; background: #2a2a2a; }
.rng { justify-content: space-between; }
.rng.start { width: 88px; padding: 0 14px 0 15px; border-right: 1px solid #333; }
.rng.end { width: 85px; padding: 0 13px 0 16px; }
.ruler { flex: 1; position: relative; display: grid; grid-template-columns: repeat(12, 66.300px); padding-left: 61.800px; align-items: start; color: #b8b8b8; padding-top: 5px; line-height: 13px; text-align: center; }
.curframe { position: absolute; left: 21px; top: 3px; width: 23px; height: 18px; background: #4772b3; color: #eee; border-radius: 4px 4px 0 0; line-height: 16px; }
.curtick { position: absolute; left: 32px; top: 22px; width: 1px; height: 4px; background: #4772b3; }
.scrollbar { position: absolute; left: 8px; right: 8px; top: 16px; height: 9px; background-color: #545454; background-image: linear-gradient(90deg, #2a2a2a 1px, transparent 1px); background-size: 33.150px 3px; background-position: 24px 100%; background-repeat: repeat-x; border-radius: 5px; display: flex; justify-content: space-between; align-items: center; }
.scrollbar i { width: 7px; height: 7px; border-radius: 50%; background: #333; border: 1px solid #222; }
.rt-l { position: absolute; left: 0; top: 16px; color: #999; }
.rt-r { position: absolute; right: 0; top: 16px; color: #999; }

.outliner { height: 197px; border-radius: 6px; overflow: hidden; background: #282828; position: relative; flex: none; }
.ohead { height: 27px; display: flex; align-items: center; padding: 0 0 2px 8px; background: #2c2c2c; }
.srch { width: 100px; height: 20px; margin-left: 16px; border-radius: 5px 0 0 5px; background: #1d1d1d; border: 1px solid #2c2c2c; display: flex; align-items: center; gap: 8px; padding-left: 4px; color: #6c6c6c; flex: none; }
.srch svg { color: #d8d8d8; }
.orow { height: 20px; display: flex; align-items: center; position: relative; }
.orow.alt { background: #2c2c2c; }
.coll { padding-left: 12px; color: #b8b8b8; background: #282828; }
.collicon { position: absolute; left: -7px; top: 3px; width: 14px; height: 15px; fill: none; stroke: #999; }
.orow .tri { position: absolute; left: 10px; top: 2px; width: 16px; height: 16px; color: #c48247; }
.trihl { position: absolute; left: 8px; top: 1px; width: 20px; height: 18px; background: #4f6c9c; border-radius: 4px; border: 1px solid #5c7aa8; }
.trihl .tri { left: 1px; top: 0; }
.oname { margin-left: 32px; color: #b4b4b4; }
.oname.act { color: #f0a030; }
.selrow { background: #334d80; }
.meshic { position: absolute; left: 100px; top: 3px; width: 15px; height: 15px; color: #17b399; }
.eyeic { position: absolute; left: 137px; top: 2px; width: 15px; height: 15px; color: #ededed; }
.camic { position: absolute; left: 158px; top: 2px; width: 15px; height: 15px; color: #ededed; }
.oscroll { position: absolute; left: 32px; right: 12px; bottom: 4px; height: 3px; background: #444; border-radius: 2px; }

.properties { height: 424px; border-radius: 6px; overflow: hidden; background: #303030; display: flex; flex-direction: column; flex: none; }
.phead { height: 23px; flex: none; display: flex; align-items: center; padding: 0 0 3px 8px; background: #2c2c2c; }
.srch.wide { width: 114px; margin-left: 22px; border-radius: 5px; gap: 7px; }
.pbody { flex: 1; display: flex; min-height: 0; }
.ptabs { width: 28px; flex: none; background: #1d1d1d; padding-top: 8px; display: flex; flex-direction: column; color: #cfcfcf; }
.ptab { height: 28px; flex: none; display: flex; align-items: center; justify-content: center; }
.ptab.gap { margin-top: 7px; }
.ptab.gap2 { margin-top: 8px; }
.ptab.active { background: #303030; border-radius: 5px 0 0 5px; margin-left: 2px; }
.world { color: #b85a5a; }
.orange { color: #e89a50; }
.blueic { color: #5a86cf; }
.tealic { color: #18b399; }
.mat { color: #b8525e; }
.dk { color: #1d1d1d; }
.pcontent { flex: 1; position: relative; padding: 0 7px 0 8px; overflow: hidden; min-width: 0; }
.ptitle { height: 20px; margin-top: 8px; display: flex; align-items: center; padding-left: 2px; color: #d8d8d8; }
.pt-name { margin-left: 8px; flex: 1; }
.ptitle .ic:last-child { margin-right: 3px; }
.pfield { height: 19px; margin-top: 17px; display: flex; background: #1d1d1d; border: 1px solid #2c2c2c; border-radius: 5px; overflow: hidden; }
.pf-ic { width: 31px; display: flex; align-items: center; padding-left: 3px; background: #282828; color: #e0e0e0; }
.pf-name { flex: 1; padding-left: 7px; line-height: 17px; color: #dadada; }
.panel { background: #3d3d3d; border-radius: 5px; color: #d4d4d4; }
.transform { height: 281px; margin-top: 10px; padding: 0 0 0 1px; }
.panel-h { height: 26px; display: flex; align-items: center; gap: 2px; padding-left: 6px; position: relative; margin-bottom: 8px; }
.grip { width: 14px; height: 6px; color: #b0b0b0; margin-left: auto; margin-right: 4px; fill: currentColor; }
.pr { display: flex; align-items: center; height: 18px; margin-bottom: 2px; position: relative; }
.pr.t { margin-bottom: 1px; }
.pr label { width: 46px; text-align: right; margin-right: 9px; color: #d0d0d0; white-space: nowrap; }
.sp8 { margin-top: 8px; }
.sp7 { margin-top: 7px; }
.num { width: 37px; height: 18px; background: #545454; border-radius: 2px; text-align: center; line-height: 18px; color: #dcdcdc; box-shadow: 0 1px 0 #2a2a2a; }
.num.dark { background: #282828; border-radius: 4px; display: flex; align-items: center; justify-content: space-between; padding: 0 1px 0 7px; box-shadow: none; height: 18px; }
.lock { width: 14px; height: 14px; margin-left: 5px; color: #c8c8c8; }
.lockgap { width: 19px; }
.dot { width: 4px; height: 4px; border-radius: 50%; background: #d8d8d8; margin-left: 10px; }
.delta { margin-top: 12px; height: 20px; display: flex; align-items: center; gap: 3px; padding-left: 21px; }
.closed { height: 25px; margin-top: 2px; display: flex; align-items: center; gap: 3px; padding-left: 7px; }
.pscroll { position: absolute; right: 2px; top: 8px; width: 3px; height: 310px; background: #484848; border-radius: 2px; }

.status { height: 20px; flex: none; display: flex; align-items: center; background: #171717; color: #9e9e9e; position: relative; }
.ms1 { margin-left: 9px; } .st-a { margin-left: 9px; }
.ms2 { margin-left: 154px; } .st-b { margin-left: 9px; }
.ms3 { margin-left: 124px; } .st-c { margin-left: 9px; }
.stats { margin-left: auto; margin-right: 1px; word-spacing: .75px; white-space: nowrap; }
.desk { width: 1090px; height: 7px; }
```
